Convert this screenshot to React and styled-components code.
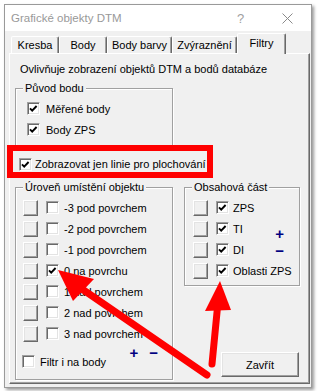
import React from 'react'
import styled, { createGlobalStyle } from 'styled-components'

const GlobalStyle = createGlobalStyle`
  body {
    margin: 0;
    background: #fff;
    font-family: 'Liberation Sans', Arial, sans-serif;
    font-size: 11px;
    color: #000;
  }
`

const Screen = styled.div`
  position: relative;
  width: 318px;
  height: 391px;
  box-sizing: border-box;
  padding: 4px 0 0 4px;
  overflow: hidden;
`
const Window = styled.div`
  width: 308px;
  height: 384px;
  box-sizing: border-box;
  border: 1px solid #9a9a9a;
  background: #f0f0f0;
  box-shadow: 2px 2px 3px rgba(0, 0, 0, 0.4);
  display: flex;
  flex-direction: column;
`
const TitleBar = styled.div`
  flex-shrink: 0;
  height: 26px;
  display: flex;
  align-items: center;
  background: #fff;
`
const Title = styled.div`
  flex: 1;
  padding-left: 6px;
  font-size: 11.5px;
  color: #999;
`
const CaptionButton = styled.div`
  width: 47px;
  height: 100%;
  display: flex;
  align-items: center;
  justify-content: center;
  color: #a0a0a0;
  font-size: 13px;
`
const Client = styled.div`
  flex: 1;
  display: flex;
  flex-direction: column;
  padding: 2px 1px 3px 4px;
`
const TabStrip = styled.div`
  position: relative;
  z-index: 1;
  display: flex;
  align-items: flex-end;
  height: 21px;
  padding-left: 2px;
  margin-bottom: -1px;
`
const Tab = styled.div`
  box-sizing: border-box;
  width: ${props => props.$w}px;
  height: ${props => (props.$active ? 21 : 17)}px;
  margin-bottom: ${props => (props.$active ? 0 : 1)}px;
  padding-bottom: ${props => (props.$active ? 3 : 0)}px;
  border: 1px solid;
  border-bottom: none;
  border-color: #fff #696969 transparent #fff;
  border-radius: 2px 2px 0 0;
  box-shadow: inset -1px 0 #a0a0a0;
  background: #f0f0f0;
  display: flex;
  align-items: center;
  justify-content: center;
  white-space: nowrap;
`
const Panel = styled.div`
  flex: 1;
  box-sizing: border-box;
  display: flex;
  flex-direction: column;
  border: 1px solid;
  border-color: #fff #696969 #696969 #fff;
  box-shadow: inset -1px -1px #a0a0a0;
  padding: 8px 7px 0 5px;
`
const Intro = styled.div`
  margin-left: 5px;
  line-height: 14px;
  white-space: nowrap;
`
const Group = styled.div`
  position: relative;
  box-sizing: border-box;
  width: ${props => props.$w}px;
  border: 1px solid #a0a0a0;
  box-shadow: inset 1px 1px #fff, 1px 1px #fff;
  padding: 9px ${props => props.$pr || 0}px ${props => props.$pb}px ${props => props.$pl}px;
  margin-top: ${props => props.$mt || 0}px;
`
const Legend = styled.span`
  position: absolute;
  top: -8px;
  left: 7px;
  padding: 0 2px;
  line-height: 14px;
  background: #f0f0f0;
  white-space: nowrap;
`
const Row = styled.div`
  display: flex;
  align-items: center;
  height: 21px;
`
const Label = styled.span`
  margin-left: ${props => props.$gap}px;
  line-height: 14px;
  white-space: nowrap;
`
const Box = styled.div`
  flex-shrink: 0;
  box-sizing: border-box;
  width: 13px;
  height: 13px;
  margin-left: ${props => props.$ml || 0}px;
  border: 1px solid;
  border-color: #a0a0a0 #fff #fff #a0a0a0;
  box-shadow: inset 1px 1px #696969, inset -1px -1px #e3e3e3;
  background: #fff;
  display: flex;
  svg {
    display: block;
  }
`
const Push = styled.div`
  flex-shrink: 0;
  box-sizing: border-box;
  width: 15px;
  height: 16px;
  margin-right: 8px;
  border: 1px solid;
  border-color: #fff #696969 #696969 #fff;
  box-shadow: inset -1px -1px #a0a0a0, inset 1px 1px #e3e3e3;
  background: #f0f0f0;
`
const Highlight = styled.div`
  position: relative;
  box-sizing: border-box;
  width: 206px;
  height: 33px;
  margin: -2px 0 0 -8px;
  border: 6px solid #ff0000;
  padding: 6px 0 1px 6px;
  display: flex;
  align-items: center;
`
const Columns = styled.div`
  display: flex;
  gap: 11px;
  margin-top: 9px;
`
const RightColumn = styled.div`
  display: flex;
  flex-direction: column;
  align-items: flex-end;
  width: 116px;
`
const PartsGrid = styled.div`
  display: grid;
  grid-template-columns: auto 1fr;
  grid-auto-rows: 21px;
`
const GridRow = styled(Row)`
  grid-column: ${props => (props.$wide ? '1 / -1' : '1')};
  grid-row: ${props => props.$row};
`
const Signs = styled.div`
  display: flex;
  flex-direction: ${props => (props.$vertical ? 'column' : 'row')};
  align-items: center;
  gap: ${props => (props.$vertical ? 2 : 10)}px;
  color: #000080;
  font-weight: bold;
  font-size: 15px;
  line-height: 15px;
`
const SideSigns = styled(Signs)`
  grid-column: 2;
  grid-row: 2 / 4;
  justify-self: end;
  align-self: start;
  margin-top: 8px;
  margin-right: 1px;
`
const FilterRow = styled(Row)`
  margin-top: 7px;
  padding-right: 14px;
`
const FilterSigns = styled(Signs)`
  margin-left: auto;
  align-self: flex-start;
  margin-top: -6px;
  gap: 11px;
`
const Button = styled.div`
  box-sizing: border-box;
  width: 78px;
  height: 25px;
  margin: auto 1px 3px 0;
  border: 1px solid;
  border-color: #fff #696969 #696969 #fff;
  box-shadow: inset -1px -1px #a0a0a0, inset 1px 1px #e3e3e3;
  display: flex;
  align-items: center;
  justify-content: center;
`
const Arrows = styled.svg`
  position: absolute;
  top: 0;
  left: 0;
  pointer-events: none;
`

const levels = [
  { label: '-3 pod povrchem' },
  { label: '-2 pod povrchem' },
  { label: '-1 pod povrchem' },
  { label: '0 na povrchu', checked: true },
  { label: '1 nad povrchem' },
  { label: '2 nad povrchem' },
  { label: '3 nad povrchem' }
]
const parts = ['ZPS', 'TI', 'DI', 'Oblasti ZPS']
const tabs = [
  { label: 'Kresba', w: 48 },
  { label: 'Body', w: 48 },
  { label: 'Body barvy', w: 65 },
  { label: 'Zvýraznění', w: 65 },
  { label: 'Filtry', w: 49, active: true }
]

const Check = ({ checked, ml }) => (
  <Box $ml={ml}>
    {checked && (
      <svg width='11' height='11' viewBox='0 0 11 11'>
        <path d='M2 5.3 L4.2 7.6 L8.6 3' fill='none' stroke='#000' strokeWidth='1.9' />
      </svg>
    )}
  </Box>
)

const App = () => (
  <Screen>
    <GlobalStyle />
    <Window>
      <TitleBar>
        <Title>Grafické objekty DTM</Title>
        <CaptionButton>?</CaptionButton>
        <CaptionButton>
          <svg width='11' height='11' viewBox='0 0 11 11'>
            <path d='M0.5 0.5 L10.5 10.5 M10.5 0.5 L0.5 10.5' stroke='#8a8a8a' strokeWidth='1' />
          </svg>
        </CaptionButton>
      </TitleBar>
      <Client>
        <TabStrip>
          {tabs.map(tab => (
            <Tab key={tab.label} $w={tab.w} $active={tab.active}>{tab.label}</Tab>
          ))}
        </TabStrip>
        <Panel>
          <Intro>Ovlivňuje zobrazení objektů DTM a bodů databáze</Intro>
          <Group $w={158} $pl={11} $pb={6} $mt={12}>
            <Legend>Původ bodu</Legend>
            <Row><Check checked /><Label $gap={6}>Měřené body</Label></Row>
            <Row><Check checked /><Label $gap={6}>Body ZPS</Label></Row>
          </Group>
          <Highlight>
            <Check checked />
            <Label $gap={3}>Zobrazovat jen linie pro plochování</Label>
          </Highlight>
          <Columns>
            <Group $w={158} $pl={7} $pb={7}>
              <Legend>Úroveň umístění objektu</Legend>
              {levels.map(level => (
                <Row key={level.label}>
                  <Push />
                  <Check checked={level.checked} />
                  <Label $gap={5}>{level.label}</Label>
                </Row>
              ))}
              <FilterRow>
                <Check ml={-1} />
                <Label $gap={5}>Filtr i na body</Label>
                <FilterSigns><span>+</span><span>−</span></FilterSigns>
              </FilterRow>
            </Group>
            <RightColumn>
              <Group $w={116} $pl={8} $pr={14} $pb={4}>
                <Legend>Obsahová část</Legend>
                <PartsGrid>
                  {parts.map((part, i) => (
                    <GridRow key={part} $row={i + 1} $wide={i === 3}>
                      <Push />
                      <Check checked />
                      <Label $gap={4}>{part}</Label>
                    </GridRow>
                  ))}
                  <SideSigns $vertical><span>+</span><span>−</span></SideSigns>
                </PartsGrid>
              </Group>
              <Button>Zavřít</Button>
            </RightColumn>
          </Columns>
        </Panel>
      </Client>
    </Window>
    <Arrows width='318' height='391' viewBox='0 0 318 391'>
      <line x1='207' y1='375' x2='82' y2='289' stroke='#ff0000' strokeWidth='7' strokeLinecap='round' />
      <polygon points='58,270 94,279 73,301' fill='#ff0000' />
      <line x1='212' y1='364' x2='218' y2='302' stroke='#ff0000' strokeWidth='7' strokeLinecap='round' />
      <polygon points='220,281 205,311 231,310' fill='#ff0000' />
    </Arrows>
  </Screen>
)

export default App
